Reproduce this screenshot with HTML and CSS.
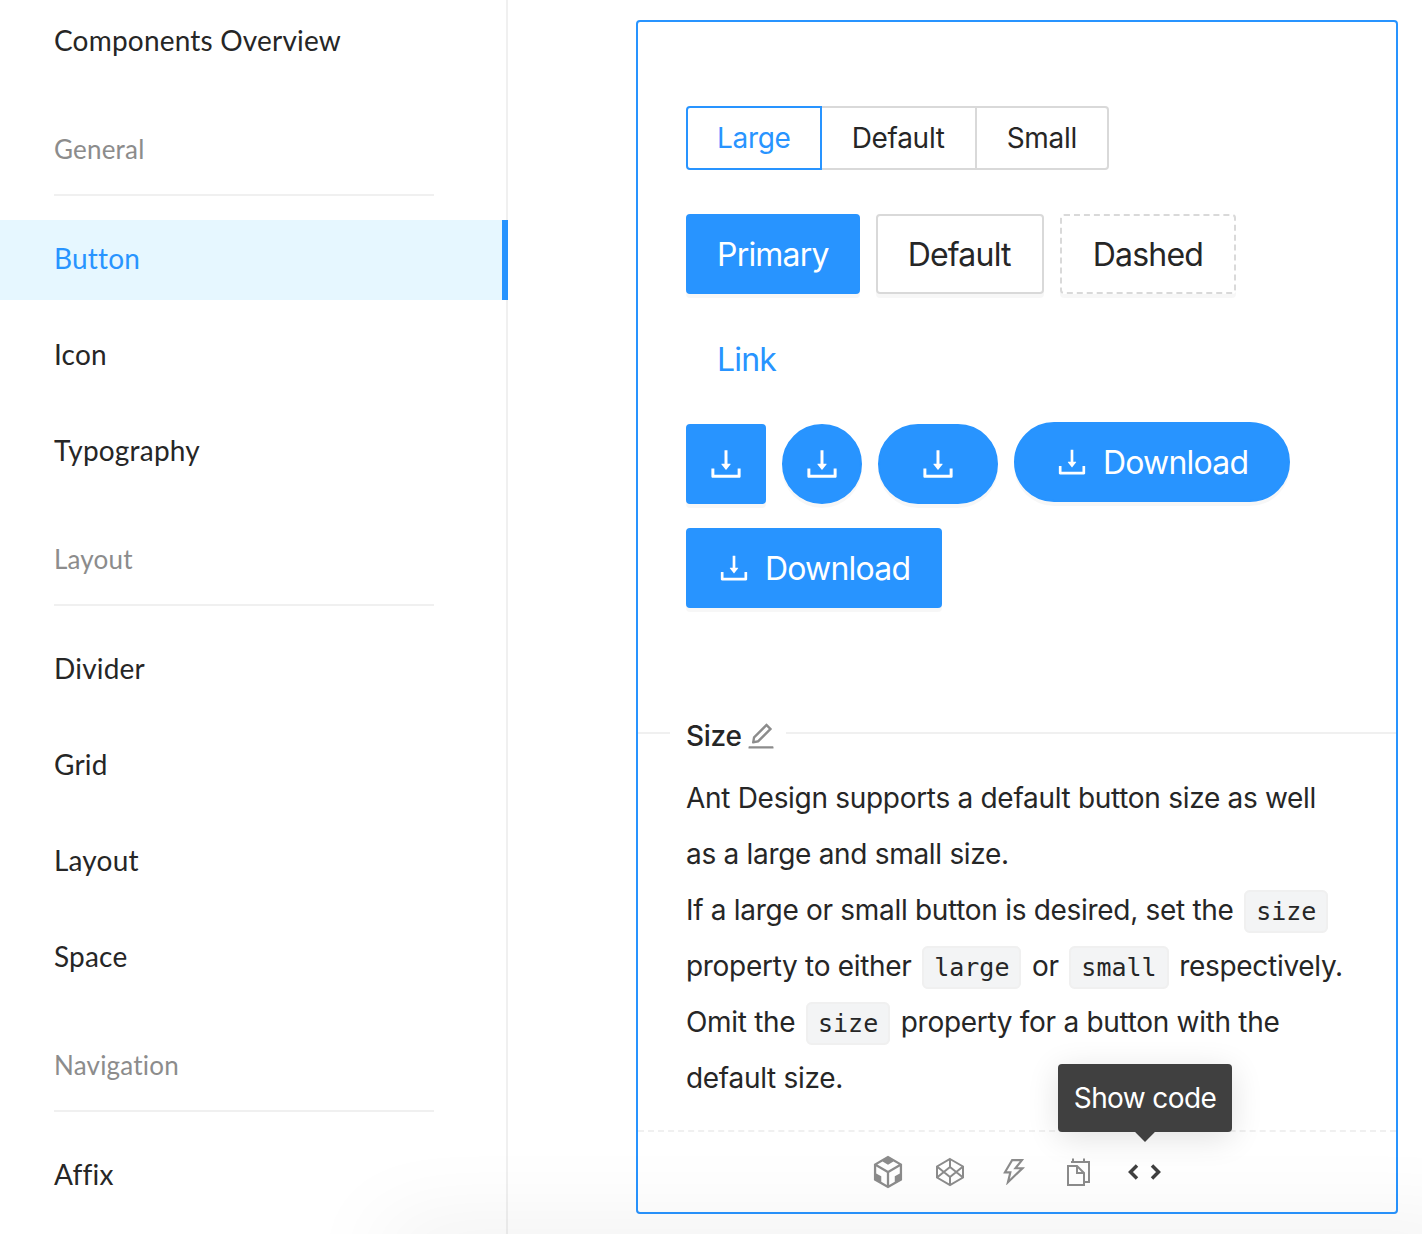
FILE: index.html
```html
<!DOCTYPE html>
<html lang="en">
<head>
	<title>Button - Ant Design</title>
	<meta charset="UTF-8">
	<link rel="stylesheet" href="styles.css">
</head>
<body>
	<svg class="defs" width="0" height="0">
		<symbol id="download" viewBox="0 0 1024 1024"><path d="M505.7 661a8 8 0 0 0 12.6 0l112-141.7c4.1-5.2.4-12.9-6.3-12.9h-74.1V168c0-4.4-3.6-8-8-8h-60c-4.4 0-8 3.6-8 8v338.3H400c-6.7 0-10.4 7.7-6.3 12.9l112 141.8zM878 626h-60c-4.4 0-8 3.6-8 8v154H214V634c0-4.4-3.6-8-8-8h-60c-4.4 0-8 3.6-8 8v198c0 17.7 14.3 32 32 32h684c17.7 0 32-14.3 32-32V634c0-4.4-3.6-8-8-8z"/></symbol>
	</svg>
	<div id="page">
		<div id="sidebar">
			<div class="menu-item top">Components Overview</div>
			<div class="menu-group">General</div>
			<div class="menu-item selected">Button</div>
			<div class="menu-item">Icon</div>
			<div class="menu-item">Typography</div>
			<div class="menu-group">Layout</div>
			<div class="menu-item">Divider</div>
			<div class="menu-item">Grid</div>
			<div class="menu-item">Layout</div>
			<div class="menu-item">Space</div>
			<div class="menu-group">Navigation</div>
			<div class="menu-item">Affix</div>
		</div>
		<div id="main">
			<div id="card">
				<div id="demo">
					<div class="radio-group">
						<span class="radio checked">Large</span>
						<span class="radio">Default</span>
						<span class="radio">Small</span>
					</div>
					<div class="btn-row">
						<span class="btn primary">Primary</span>
						<span class="btn outline">Default</span>
						<span class="btn dashed">Dashed</span>
					</div>
					<div class="btn-row link-row">
						<span class="btn link">Link</span>
					</div>
					<div class="btn-row">
						<span class="btn primary icon-only"><svg class="ic"><use href="#download"/></svg></span>
						<span class="btn primary icon-only circle"><svg class="ic"><use href="#download"/></svg></span>
						<span class="btn primary icon-only pill"><svg class="ic"><use href="#download"/></svg></span>
						<span class="btn primary round"><svg class="ic small"><use href="#download"/></svg>Download</span>
					</div>
					<div class="btn-row">
						<span class="btn primary with-icon"><svg class="ic small"><use href="#download"/></svg>Download</span>
					</div>
				</div>
				<div id="meta">
					<div class="meta-title">
						<span class="meta-name">Size</span>
						<svg class="edit" viewBox="0 0 1024 1024"><path d="M257.7 752c2 0 4-.2 6-.5L431.9 722c2-.4 3.9-1.3 5.3-2.8l423.9-423.9a9.96 9.96 0 0 0 0-14.1L694.9 114.9c-1.9-1.9-4.4-2.9-7.1-2.9s-5.2 1-7.1 2.9L256.8 538.8c-1.5 1.5-2.4 3.3-2.8 5.3l-29.5 168.2a33.5 33.5 0 0 0 9.4 29.8c6.6 6.4 14.9 9.9 23.8 9.9zm67.4-174.4L687.8 215l73.3 73.3-362.7 362.6-88.9 15.7 15.6-89zM880 836H144c-17.7 0-32 14.3-32 32v36c0 4.4 3.6 8 8 8h784c4.4 0 8-3.6 8-8v-36c0-17.7-14.3-32-32-32z"/></svg>
					</div>
					<div class="desc">
						<p>Ant Design supports a default button size as well as a large and small size.</p>
						<p>If a large or small button is desired, set the <code>size</code> property to either <code>large</code> or <code>small</code> respectively.<br>Omit the <code>size</code> property for a button with the default size.</p>
					</div>
				</div>
				<div id="actions">
					<svg class="act sandbox" viewBox="0 0 1024 1024"><path d="M709.6 210l.4-.2h.2L512 96 313.9 209.8h-.2l.7.3L151.5 304v416L512 928l360.5-208V304l-162.9-94zM482.7 843.6L339.6 761V621.4L210 547.8V372.9l272.7 157.3v313.4zM238.2 321.5l134.7-77.8 138.9 79.7 139.1-79.9 135.2 78-273.9 158-274-158zM814 548.3l-128.8 73.1v139.1l-143.9 83V530.4L814 373.1v175.2z"/></svg>
					<svg class="act" viewBox="0 0 32 32"><path class="line" d="M16 3L29 10.500V21.500L16 29L3 21.500V10.500ZM3 10.500L16 21L29 10.500M3 21.500L16 11L29 21.500M16 3V11M16 21V29"/></svg>
					<svg class="act" viewBox="0 0 1024 1024"><path d="M848 359.300H627.700L825.800 109c4.100-5.300.4-13-6.300-13H436c-2.800 0-5.500 1.500-6.900 4L170 547.500c-3.100 5.300.7 12 6.900 12h174.400l-89.400 357.600c-1.900 7.800 7.500 13.300 13.300 7.700L853.500 373c5.200-4.900 1.700-13.700-5.500-13.700zM378.200 732.500l60.300-241H281.100l189.600-327.400h224.600L487 427.400h211L378.200 732.500z"/></svg>
					<svg class="act" viewBox="0 0 32 32"><path class="line" d="M11 6V2.500M22 6V2.500M9 6H27V26H23M6 10H15L22 17V29H6ZM15 10V17H22"/></svg>
					<svg class="act code-ic" viewBox="0 0 34 20"><path d="M10 3.500L3.500 10L10 16.500M25 3.500L31.500 10L25 16.500"/></svg>
					<div class="tooltip">Show code</div>
				</div>
			</div>
		</div>
		<div id="fade"></div>
	</div>
</body>
</html>
```
FILE: styles.css
```css
*{
	margin: 0;
	padding: 0;
	box-sizing: border-box;
}
html,body{
	height: 100%;
	overflow: hidden;
	background: white;
}
.defs{
	position: absolute;
}
#page{
	height: 1234px;
	display: flex;
	position: relative;
	overflow: hidden;
	font-family: Inter, "Liberation Sans", sans-serif;
	color: #262626;
}
/* sidebar */
#sidebar{
	width: 508px;
	flex: none;
	border-right: 2px solid #f0f0f0;
	font-family: Lato, "Noto Sans", sans-serif;
	font-size: 28px;
	letter-spacing: .2px;
}
.menu-item{
	height: 80px;
	line-height: 76px;
	padding-left: 54px;
	margin-bottom: 16px;
	width: 508px;
}
.menu-item.top{
	line-height: 80px;
	margin-bottom: 18px;
}
.menu-item.selected{
	background: #e6f7ff;
	color: #2894ff;
	border-right: 6px solid #2894ff;
}
.menu-group{
	height: 98px;
	margin: 0 72px 24px 54px;
	padding-top: 33px;
	line-height: 36px;
	font-size: 26px;
	color: #8c8c8c;
	border-bottom: 2px solid #f0f0f0;
}
/* card */
#main{
	flex: 1;
	padding: 20px 24px 0 128px;
}
#card{
	height: 1194px;
	border: 2px solid #2894ff;
	border-radius: 4px;
	display: flex;
	flex-direction: column;
}
#demo{
	height: 696px;
	padding: 84px 48px 0;
}
.radio-group{
	display: flex;
	margin-bottom: 44px;
}
.radio{
	height: 64px;
	line-height: 60px;
	padding: 0 30px;
	font-size: 28px;
	letter-spacing: -.3px;
	border: 2px solid #d9d9d9;
	border-left-width: 0;
}
.radio:last-child{
	border-radius: 0 4px 4px 0;
}
.radio.checked{
	color: #2894ff;
	padding: 0 29px;
	border: 2px solid #2894ff;
	border-radius: 4px 0 0 4px;
}
.btn-row{
	display: flex;
	gap: 16px;
	margin-bottom: 24px;
}
.link-row{
	margin-top: 26px;
}
.btn{
	height: 80px;
	padding: 1px 29px 0;
	font-size: 32px;
	letter-spacing: -.8px;
	border: 2px solid #d9d9d9;
	border-radius: 4px;
	box-shadow: 0 4px 0 rgba(0,0,0,.03);
	display: flex;
	align-items: center;
}
.btn.outline{
	padding: 1px 31px 0 30px;
}
.btn.dashed{
	padding: 1px 31px 0;
	border-style: dashed;
}
.btn.primary{
	background: #2894ff;
	border-color: #2894ff;
	color: white;
}
.btn.link{
	padding: 0 29px 2px;
	border-color: transparent;
	box-shadow: none;
	color: #2894ff;
}
.btn.icon-only{
	width: 80px;
	padding: 0;
	justify-content: center;
}
.btn.circle{
	border-radius: 50%;
}
.btn.pill{
	width: 120px;
	border-radius: 40px;
}
.btn.round{
	border-radius: 40px;
	padding: 0 40px 0 38px;
	margin-top: -2px;
}
.btn.with-icon{
	padding: 0 30px 0 28px;
}
.ic{
	width: 40px;
	height: 40px;
	fill: white;
}
.ic.small{
	width: 36px;
	height: 36px;
	margin-right: 13px;
}
/* description */
#meta{
	flex: 1;
}
.meta-title{
	height: 36px;
	display: flex;
	align-items: center;
	gap: 3px;
	margin-bottom: 16px;
	padding-left: 48px;
	position: relative;
}
.meta-title:before,.meta-title:after{
	content: "";
	position: absolute;
	top: 14px;
	height: 2px;
	background: #f0f0f0;
	left: 0;
	width: 32px;
}
.meta-title:after{
	left: 148px;
	width: 610px;
}
.meta-name{
	font-size: 28px;
	font-weight: 500;
	letter-spacing: -.3px;
}
.edit{
	width: 32px;
	height: 32px;
	fill: #8c8c8c;
}
.desc{
	padding: 0 48px;
	font-size: 28px;
	line-height: 56px;
	letter-spacing: -.3px;
}
code{
	font-family: "DejaVu Sans Mono", monospace;
	font-size: 25px;
	line-height: 1;
	letter-spacing: 0;
	background: #f3f4f5;
	border: 2px solid #f0f0f0;
	border-radius: 6px;
	padding: 5px 10px;
	margin: 0 3px;
}
/* bottom icons */
#actions{
	height: 82px;
	border-top: 2px dashed #f0f0f0;
	display: flex;
	justify-content: center;
	align-items: center;
	gap: 32px;
	position: relative;
	padding-right: 5px;
}
.act{
	width: 32px;
	height: 32px;
	fill: #8c8c8c;
}
.act.sandbox{
	width: 40px;
	height: 40px;
	margin-right: -6px;
}
.line{
	fill: none;
	stroke: #8c8c8c;
	stroke-width: 2;
}
.act.code-ic{
	width: 34px;
	height: 20px;
	margin-left: 1px;
	fill: none;
}
.code-ic path{
	fill: none;
	stroke: #404040;
	stroke-width: 3.5;
}
.tooltip{
	position: absolute;
	left: 420px;
	bottom: 80px;
	width: 174px;
	height: 68px;
	line-height: 68px;
	text-align: center;
	font-size: 28px;
	letter-spacing: -.6px;
	color: white;
	background: #404040;
	border-radius: 4px;
	box-shadow: 0 6px 32px rgba(0,0,0,.12);
}
.tooltip:after{
	content: "";
	position: absolute;
	left: 80px;
	bottom: -7px;
	width: 14px;
	height: 14px;
	background: #404040;
	transform: rotate(45deg);
}
/* soft shadow of the bar below the fold */
#fade{
	position: absolute;
	left: 385px;
	right: -60px;
	bottom: -40px;
	height: 40px;
	box-shadow: 0 0 90px rgba(0,0,0,.1);
}
```
